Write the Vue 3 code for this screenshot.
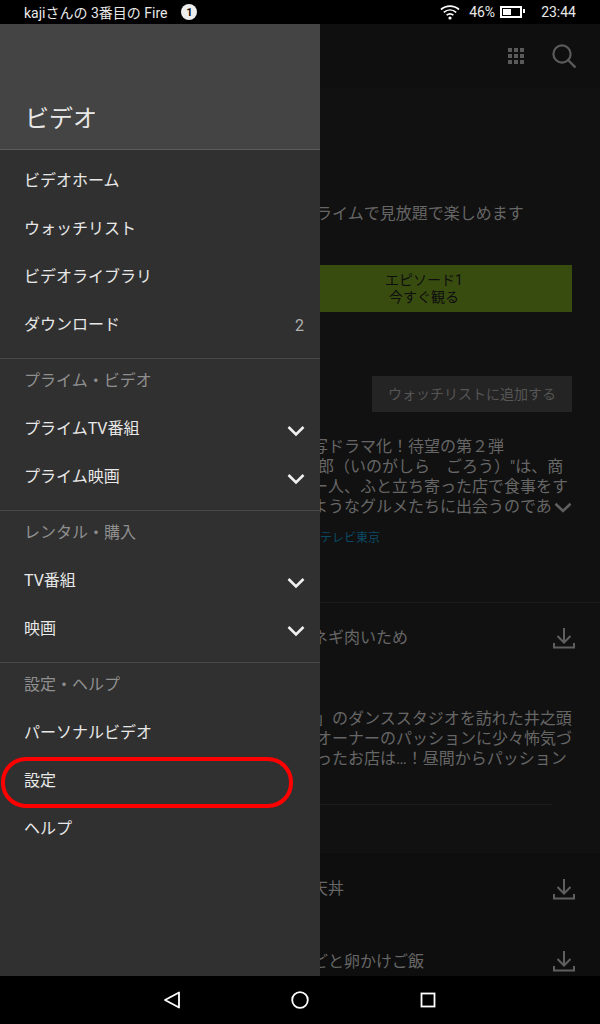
<template>
  <div class="screen">
    <header class="status-bar">
      <div class="status-left">
        <span>kajiさんの 3番目の Fire</span>
        <span class="notice">1</span>
      </div>
      <div class="status-right">
        <svg class="wifi" width="20" height="16" viewBox="0 0 20 16">
          <path d="M1 5.5C6 1 14 1 19 5.5M3.8 8.4C7.5 5.2 12.5 5.2 16.2 8.4M6.6 11.2C8.6 9.6 11.4 9.6 13.4 11.2" fill="none" stroke="#fff" stroke-width="1.7" />
          <circle cx="10" cy="14" r="1.6" fill="#fff" />
        </svg>
        <span class="percent">46%</span>
        <span class="battery"><span class="battery-level"></span></span>
        <span class="clock">23:44</span>
      </div>
    </header>

    <main class="app">
      <section class="page">
        <div class="toolbar">
          <span class="apps">
            <i v-for="n in 9" :key="n"></i>
          </span>
          <svg width="24" height="24" viewBox="0 0 24 24">
            <circle cx="10" cy="10" r="8.6" fill="none" stroke="#5a5a5a" stroke-width="2.2" />
            <path d="M16 16L23.5 23.5" stroke="#5a5a5a" stroke-width="2.4" />
          </svg>
        </div>

        <div class="detail">
          <p class="line prime">ライムで見放題で楽しめます</p>
          <div class="play">
            <span>エピソード1</span>
            <span>今すぐ観る</span>
          </div>
          <div class="watch-row">
            <div class="watch">ウォッチリストに追加する</div>
          </div>
          <div class="synopsis">
            <p class="line">写ドラマ化！待望の第２弾</p>
            <p class="line second">郎（いのがしら　ごろう）"は、商</p>
            <p class="line">ー人、ふと立ち寄った店で食事をす</p>
            <div class="more">
              <p class="line">ようなグルメたちに出会うのであ</p>
              <svg width="18" height="11" viewBox="0 0 18 11">
                <path d="M1.5 1.8L9 9L16.5 1.8" fill="none" stroke="#5f5f5f" stroke-width="2.6" />
              </svg>
            </div>
          </div>
          <p class="studio">テレビ東京</p>
        </div>

        <div class="episode">
          <div class="episode-head">
            <p class="line">ネギ肉いため</p>
            <svg class="download" width="22" height="22" viewBox="0 0 22 22">
              <path d="M11 1V15M4.5 9L11 15.5L17.5 9M1 16V20.5H21V16" fill="none" stroke="#5f5f5f" stroke-width="2" />
            </svg>
          </div>
          <div class="episode-text">
            <p class="line">」のダンススタジオを訪れた井之頭</p>
            <p class="line">オーナーのパッションに少々怖気づ</p>
            <p class="line">ったお店は…！昼間からパッション</p>
          </div>
          <div class="episode-rule"></div>
        </div>

        <div class="more-episodes">
          <div v-for="row in moreRows" :key="row" class="episode-head">
            <p class="line">{{ row }}</p>
            <svg class="download" width="22" height="22" viewBox="0 0 22 22">
              <path d="M11 1V15M4.5 9L11 15.5L17.5 9M1 16V20.5H21V16" fill="none" stroke="#5f5f5f" stroke-width="2" />
            </svg>
          </div>
        </div>
      </section>

      <nav class="drawer">
        <div class="drawer-head">ビデオ</div>
        <div v-for="(group, i) in groups" :key="i" class="group">
          <div v-if="group.label" class="group-label">{{ group.label }}</div>
          <div v-for="item in group.items" :key="item.name" class="item">
            <span>{{ item.name }}</span>
            <span v-if="item.count" class="count">{{ item.count }}</span>
            <svg v-if="item.expand" class="chevron" width="18" height="12" viewBox="0 0 18 12">
              <path d="M1.5 2L9 9.5L16.5 2" fill="none" stroke="#f0f0f0" stroke-width="2.6" />
            </svg>
            <span v-if="item.marked" class="marker"></span>
          </div>
        </div>
      </nav>
    </main>

    <footer class="nav-bar">
      <svg width="18" height="18" viewBox="0 0 18 18">
        <path d="M16 1.5V16.5L2 9Z" fill="none" stroke="#fff" stroke-width="1.8" stroke-linejoin="round" />
      </svg>
      <svg width="18" height="18" viewBox="0 0 18 18">
        <circle cx="9" cy="9" r="7.8" fill="none" stroke="#fff" stroke-width="1.8" />
      </svg>
      <svg width="16" height="16" viewBox="0 0 16 16">
        <rect x="1.5" y="1.5" width="13" height="13" fill="none" stroke="#fff" stroke-width="1.8" />
      </svg>
    </footer>
  </div>
</template>

<script setup>
const moreRows = ['天丼', 'どと卵かけご飯']

const groups = [
  {
    items: [
      { name: 'ビデオホーム' },
      { name: 'ウォッチリスト' },
      { name: 'ビデオライブラリ' },
      { name: 'ダウンロード', count: 2 }
    ]
  },
  {
    label: 'プライム・ビデオ',
    items: [
      { name: 'プライムTV番組', expand: true },
      { name: 'プライム映画', expand: true }
    ]
  },
  {
    label: 'レンタル・購入',
    items: [
      { name: 'TV番組', expand: true },
      { name: '映画', expand: true }
    ]
  },
  {
    label: '設定・ヘルプ',
    items: [
      { name: 'パーソナルビデオ' },
      { name: '設定', marked: true },
      { name: 'ヘルプ' }
    ]
  }
]
</script>

<style>
html,
body {
  margin: 0;
  background: #000;
}
</style>

<style scoped>
.screen {
  display: flex;
  flex-direction: column;
  width: 600px;
  height: 1024px;
  overflow: hidden;
  font-family: Roboto, "Noto Sans CJK JP", sans-serif;
  background: #000;
}

.status-bar {
  display: flex;
  flex: 0 0 24px;
  align-items: center;
  justify-content: space-between;
  padding: 0 24px;
  color: #e8e8e8;
  font-size: 14px;
}

.status-left,
.status-right {
  display: flex;
  align-items: center;
}

.notice {
  display: flex;
  align-items: center;
  justify-content: center;
  width: 16px;
  height: 16px;
  margin-left: 14px;
  border-radius: 50%;
  background: #eee;
  color: #111;
  font-size: 11px;
  font-weight: 700;
}

.wifi {
  margin-right: 9px;
}

.battery {
  position: relative;
  width: 16px;
  height: 6px;
  margin: 0 19px 0 5px;
  padding: 1px;
  border: 2px solid #fff;
}

.battery::after {
  content: "";
  position: absolute;
  top: 1px;
  right: -5px;
  width: 2px;
  height: 4px;
  background: #fff;
}

.battery-level {
  display: block;
  width: 8px;
  height: 100%;
  background: #fff;
}

.app {
  position: relative;
  flex: 1;
  min-height: 0;
}

.page {
  height: 100%;
  margin-left: 320px;
  overflow: hidden;
  background: #111;
  color: #666;
  font-size: 16px;
}

.line {
  margin: 0 0 0 -8px;
  white-space: nowrap;
  line-height: 20px;
}

.toolbar {
  display: flex;
  align-items: center;
  justify-content: flex-end;
  gap: 28px;
  height: 64px;
  padding-right: 24px;
  background: #0f0f0f;
}

.apps {
  display: grid;
  grid-template-columns: repeat(3, 4px);
  gap: 2px;
}

.apps i {
  width: 4px;
  height: 4px;
  background: #5a5a5a;
}

.detail {
  height: 514px;
  padding: 116px 28px 0 0;
  box-sizing: border-box;
}

.prime {
  margin-left: -4px;
}

.play {
  display: flex;
  flex-direction: column;
  align-items: center;
  justify-content: center;
  box-sizing: border-box;
  width: 298px;
  height: 47px;
  margin: 41px 0 0 -46px;
  padding-left: 2px;
  background: #384c10;
  color: #0e0e0e;
  font-size: 14px;
  line-height: 17px;
}

.watch-row {
  display: flex;
  justify-content: flex-end;
  margin-top: 64px;
}

.watch {
  width: 200px;
  height: 36px;
  background: #242424;
  color: #555;
  font-size: 14px;
  line-height: 36px;
  text-align: center;
}

.synopsis {
  margin-top: 25px;
}

.second {
  margin-left: -2px;
}

.more {
  display: flex;
  align-items: center;
  justify-content: space-between;
}

.studio {
  margin: 13px 0 0;
  color: #0b4a66;
  font-size: 12px;
  line-height: 16px;
}

.episode {
  border-top: 1px solid #1b1b1b;
  height: 251px;
  box-sizing: border-box;
  padding-right: 25px;
}

.episode-head {
  display: flex;
  align-items: center;
  justify-content: space-between;
}

.episode > .episode-head {
  height: 70px;
}

.episode-text {
  margin-top: 36px;
}

.episode-text .line {
  margin-left: -4px;
}

.episode-rule {
  margin-top: 35px;
  margin-right: 23px;
  border-top: 1px solid #1b1b1b;
}

.more-episodes {
  display: flex;
  flex-direction: column;
  gap: 24px;
  height: 200px;
  padding: 12px 25px 0 0;
  background: #0e0e0e;
}

.more-episodes .episode-head {
  height: 48px;
}

.more-episodes .episode-head + .episode-head .line {
  margin-bottom: -1px;
  padding-top: 1px;
}

.drawer {
  position: absolute;
  top: 0;
  bottom: 0;
  left: 0;
  width: 320px;
  background: #303030;
  color: #e8e8e8;
  font-size: 16px;
}

.drawer-head {
  display: flex;
  align-items: flex-end;
  box-sizing: border-box;
  height: 126px;
  padding: 0 0 12px 25px;
  border-bottom: 1px solid #5c5c5c;
  background: #444;
  font-size: 24px;
  line-height: 36px;
}

.group {
  padding: 6px 0 10px;
  border-bottom: 1px solid #484848;
}

.group + .group {
  padding-top: 0;
}

.group:last-child {
  border-bottom: 0;
}

.group-label {
  height: 45px;
  padding-left: 24px;
  color: #8f8f8f;
  line-height: 44px;
}

.item {
  position: relative;
  display: flex;
  align-items: center;
  justify-content: space-between;
  box-sizing: border-box;
  height: 48px;
  padding: 0 16px 2px 24px;
}

.count {
  margin-top: 4px;
  color: #b0b0b0;
  font-size: 16px;
}

.chevron {
  margin: 7px -1px 0 0;
}

.marker {
  position: absolute;
  top: 1px;
  left: 1px;
  width: 284px;
  height: 43px;
  border: 4px solid #f00;
  border-radius: 25px;
}

.nav-bar {
  display: grid;
  flex: 0 0 48px;
  grid-template-columns: repeat(3, 128px);
  align-items: center;
  justify-content: center;
  justify-items: center;
  background: #000;
}
</style>
